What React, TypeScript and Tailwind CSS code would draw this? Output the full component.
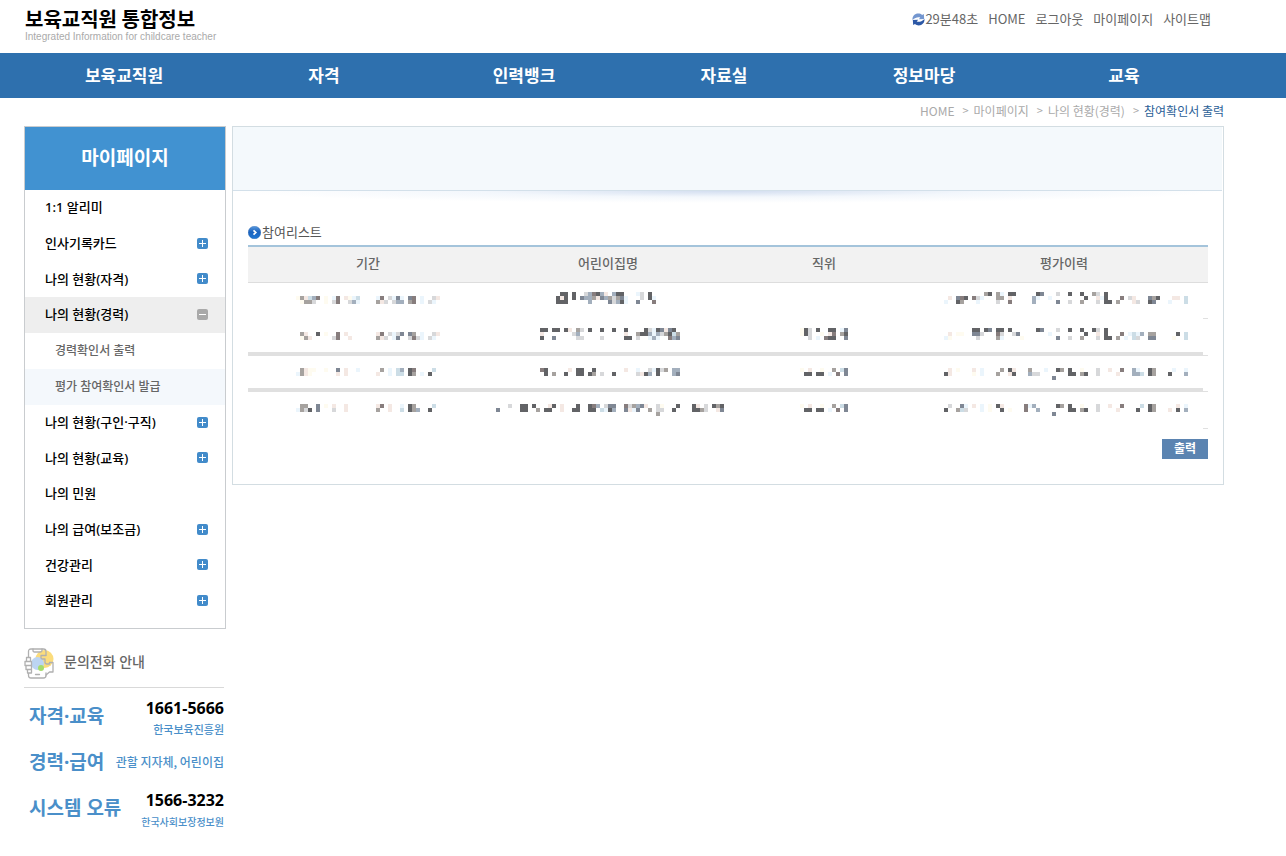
interface MenuItem {
  label: string;
  icon?: 'plus' | 'minus';
  children?: { label: string; current?: boolean }[];
}

interface ListRow {
  divider: boolean;
  period: string[];
  name: string[];
  position: string[];
  history: string[];
}

const NAV = ['보육교직원', '자격', '인력뱅크', '자료실', '정보마당', '교육'];

const UTIL_LINKS = ['HOME', '로그아웃', '마이페이지', '사이트맵'];

const CRUMBS = ['HOME', '마이페이지', '나의 현황(경력)'];

const MENU: MenuItem[] = [
  { label: '1:1 알리미' },
  { label: '인사기록카드', icon: 'plus' },
  { label: '나의 현황(자격)', icon: 'plus' },
  {
    label: '나의 현황(경력)',
    icon: 'minus',
    children: [{ label: '경력확인서 출력' }, { label: '평가 참여확인서 발급', current: true }],
  },
  { label: '나의 현황(구인·구직)', icon: 'plus' },
  { label: '나의 현황(교육)', icon: 'plus' },
  { label: '나의 민원' },
  { label: '나의 급여(보조금)', icon: 'plus' },
  { label: '건강관리', icon: 'plus' },
  { label: '회원관리', icon: 'plus' },
];

// Masked values: every line is a list of runs, "start column + one colour letter per cell"
const ROWS: ListRow[] = [
  {
    divider: false,
    period: [
      '',
      '0C 1GPTSB 7C 9KB 12PCKT 20KB 23LKNK 28NB 31K 34LP',
      '1CGGL 7C 9LB 13LSK 20GPL 24LSS 28GB 31K 33LK',
    ],
    name: [
      '18DD 21D 24LSBDSP 31SDD 37KL 40D',
      '17DPD 21D 23NSSGPNSGLGNK 38L 40DK',
      '17DDD 25S 30NLSDK 37N 41B',
    ],
    position: [],
    history: [
      '10GD 13GK 16DD 23DN 28L 31D 34D 37GL 40D',
      '1P 3NBD 7BLK 13GG 16P 22SK 26K 35D 38PK 40D 44B 46LP 51NGD 57PP 60T',
      '0K 3DG 8K 13L 16B 22S 28N 31L 34G 38L 40DD 43G 47PL 51DN 56K 60T',
    ],
  },
  {
    divider: true,
    period: [
      '',
      '1GP 5D 7C 10B 12P 20PB 23LKLN 28NG 31K 34LP',
      '1CGP 9LB 13P 20GPL 24KN 28LBLK 33LK',
    ],
    name: [
      '13DD 16DD 19DP 22GL 25D 28D 31D 34D 39DLKDNP 45ND',
      '13P 21LS 34P 37GDDSKSLGDTG',
      '13D 16N 22LL 28L 34DD 37L 40KSK 45BSN',
    ],
    position: ['0C 1DL 4D 7DD 10KN', '0C 1DL 5C 7PB 10GD', '2L 4K 6BDD 11N'],
    history: [
      '7DD 10DN 13DD 16D 23DN 28L 31D 34D 37DL 40D',
      '1P 3CC 7NNL 13BL 17LN 26K 35D 38P 40D 44B 46KTKS 51GG 58D 60T',
      '0KC 8L 13GK 19C 28N 31L 34G 38L 40DD 43G 45K 47TL 51NN 57C 60T',
    ],
  },
  {
    divider: true,
    period: [
      '',
      '1GPCC 7C 10N 12P 15K 21G 23K 25TS 28DB 34T',
      '0KGPC 10P 12P 20P 23K 25TT 28DG 31K 33D',
    ],
    name: [
      '',
      '13BD 20P 22DD 26D 34P 37K 40LKDLG 46SS',
      '14D 16G 19D 22DD 25DG 28L 31D 37LPDS 42D 46SN',
    ],
    position: ['', '0C 2P 5C 8G 10TN', '1DD 4DD 7K 9B 11N'],
    history: [
      '',
      '1P 3C 7P 9K 14G 16DP 21G 25K 28DG 31D 34C 38L 41P 44B 47SK 51DG 57K 60K',
      '0DP 7C 9K 13G 16PD 21SLL 31DD 34GD 38L 43P 47SST 51DG 56D 60S',
      '27N',
    ],
  },
  {
    divider: false,
    period: [
      '',
      '1GG 5N 7C 9P 12P 20PB 23P 26K 28DG 34T',
      '0KGLD 5N 9L 12P 20G 23P 26T 28DGS 33D',
    ],
    name: [
      '',
      '5L 8DD 11D 15PD 18P 22D 25DBS 29LNN 34BLGS 38NP 42LC 47D 51DP 54L 56DGD',
      '2N 8DD 12G 14DD 18P 21DD 25DD 28TKDS 34NPKN 40G 42LL 46D 51DDGL 57PN',
      '42G',
    ],
    position: ['', '0C 2P 5C 8G 10TN', '1DD 4DD 7K 9B 11N'],
    history: [
      '',
      '1L 4NK 7P 9K 11C 13DP 20BK 22S 28DG 31D 34C 38L 41P 44B 49T 51DG 58P 60K',
      '0D 3GTL 9K 11C 14D 16C 20B 23S 31DD 34GD 38L 43P 48D 51DG 56P 58D 60S',
      '27N',
    ],
  },
];

const TONES: Record<string, string> = {
  D: '#626366',
  B: '#877d7d',
  G: '#a6a29f',
  S: '#a3afbd',
  L: '#d7d8da',
  C: '#fefbf0',
  P: '#f4e8e3',
  K: '#ebf5fc',
  T: '#ccdde6',
  N: '#7f8794',
};

const CELL = 4;

function Masked({ lines, cols, start = 0 }: { lines: string[]; cols: number; start?: number }) {
  const cells = lines.flatMap((line, y) =>
    line
      .split(' ')
      .filter(Boolean)
      .flatMap(run => {
        const from = parseInt(run, 10);
        return run
          .replace(/\d+/, '')
          .split('')
          .map((tone, i) => ({ x: from + i + start, y, tone }));
      })
  );

  return (
    <svg
      width={cols * CELL}
      height={4 * CELL}
      shapeRendering="crispEdges"
      className="mx-auto block"
      aria-hidden="true"
    >
      {cells.map(c => (
        <rect
          key={`${c.x}-${c.y}`}
          x={c.x * CELL}
          y={c.y * CELL}
          width={CELL}
          height={CELL}
          fill={TONES[c.tone]}
        />
      ))}
    </svg>
  );
}

function ToggleIcon({ type }: { type: 'plus' | 'minus' }) {
  return (
    <svg
      width="11"
      height="11"
      viewBox="0 0 11 11"
      shapeRendering="crispEdges"
      className="mb-[2px]"
      aria-hidden="true"
    >
      <rect
        width="11"
        height="11"
        rx="2"
        shapeRendering="auto"
        fill={type === 'plus' ? '#428bca' : '#a9a9a9'}
      />
      <rect x="2" y="5" width="7" height="1" fill="#fff" />
      {type === 'plus' && <rect x="5" y="2" width="1" height="7" fill="#fff" />}
    </svg>
  );
}

function RefreshIcon() {
  return (
    <svg width="13" height="13" viewBox="0 0 13 13" aria-hidden="true">
      <path
        d="M.5 7C.2 3.300 2.800.6 6.200.6c1.600 0 2.900.5 3.900 1.400L11.800 1l.4 4.900-5.400.3 1.500-1.700C6 3.600 3.300 4.400.5 7Z"
        fill="#7396cf"
      />
      <path
        d="M12.500 6c.3 3.700-2.300 6.400-5.700 6.400-1.600 0-2.900-.5-3.900-1.400L1.200 12 .8 7.100l5.400-.3-1.500 1.700c2.300.9 5 .1 7.800-2.500Z"
        fill="#2c58a6"
      />
    </svg>
  );
}

function BulletIcon() {
  return (
    <svg width="13" height="13" viewBox="0 0 13 13" aria-hidden="true">
      <defs>
        <linearGradient id="bullet" x1="0" y1="0" x2="0" y2="1">
          <stop offset="0" stopColor="#5a9be0" />
          <stop offset=".45" stopColor="#1b62bd" />
          <stop offset="1" stopColor="#1f78d6" />
        </linearGradient>
      </defs>
      <circle cx="6.500" cy="6.500" r="6.300" fill="url(#bullet)" stroke="#1d5ba8" strokeWidth=".4" />
      <path d="M5.500 4.300 7.800 6.500 5.500 8.700" fill="none" stroke="#fff" strokeWidth="1.700" />
    </svg>
  );
}

function PhoneIcon() {
  return (
    <svg width="30" height="31" viewBox="0 0 30 31" fill="none" aria-hidden="true">
      <circle cx="20.500" cy="11" r="9" fill="#fbdc7c" />
      <circle cx="13.500" cy="15.500" r="6.500" fill="#bcd5f2" />
      <circle cx="17" cy="20" r="3" fill="#a5dc6c" />
      <g stroke="#b0b0b0" strokeWidth="1.300" strokeLinejoin="round" strokeLinecap="round">
        <path d="M4.500 13V3.500Q4.500 1 7 1h12.500Q22 1 22 3.500V7" />
        <path d="M4.500 25v2.500Q4.500 30 7 30h12.500q2.500 0 2.500-2.500V25" />
        <path d="M9 1v1.500Q9 4 10.500 4h6Q18 4 18 2.500V1" />
        <path d="M11.500 26.500h4" />
        <path d="M2.500 9.500h4v4h-4ZM1 13.500h6.500v4H1ZM2 17.500h5.500v4H2ZM3.500 21.500h4V25h-4Z" fill="#fff" />
        <path d="M22 7.500h-5v2.500q0 1 1.500 1H21V14q0 2 2 2h2.500v-1.500H29V24h-3.500l-3.500 3" />
      </g>
    </svg>
  );
}

function Header() {
  return (
    <header>
      <div className="flex h-[53px] justify-between pl-[25px] pr-[75px] font-['Noto_Sans_CJK_KR',sans-serif]">
        <a href="#" className="mt-[6px] block">
          <strong className="block text-[20px] leading-[25px] text-black">보육교직원 통합정보</strong>
          <span className="block font-['Liberation_Sans',sans-serif] text-[10px] leading-3 text-[#aaa]">
            Integrated Information for childcare teacher
          </span>
        </a>
        <ul className="mt-[9px] flex h-5 items-center gap-[10px] text-[13px] text-[#666]">
          <li className="flex items-center">
            <RefreshIcon />
            29분48초
          </li>
          {UTIL_LINKS.map(link => (
            <li key={link}>
              <a href="#">{link}</a>
            </li>
          ))}
        </ul>
      </div>
      <nav className="bg-[#2e70ae] pl-6 pr-[62px]">
        <ul className="grid h-[45px] grid-cols-6 items-center text-center text-[17px] font-bold text-white">
          {NAV.map(item => (
            <li key={item}>
              <a href="#">{item}</a>
            </li>
          ))}
        </ul>
      </nav>
    </header>
  );
}

function SideMenu() {
  return (
    <nav className="border border-[#c9cccf] pb-[9px]">
      <h2 className="flex h-[63px] items-center justify-center bg-[#4192d1] text-[19px] font-bold text-white">
        마이페이지
      </h2>
      <ul className="text-[13px] font-medium text-black">
        {MENU.map(item => (
          <li key={item.label} className="group">
            <a
              href="#"
              className={`flex h-9 items-center justify-between pl-5 pr-[17px] group-nth-[3n]:h-[35px] ${
                item.icon === 'minus' ? 'bg-[#eee]' : ''
              }`}
            >
              {item.label}
              {item.icon && <ToggleIcon type={item.icon} />}
            </a>
            {item.children && (
              <ul className="text-xs text-[#666]">
                {item.children.map(child => (
                  <li key={child.label}>
                    <a
                      href="#"
                      className={`flex h-9 items-center pl-[30px] ${child.current ? 'bg-[#f4f8fc]' : ''}`}
                    >
                      {child.label}
                    </a>
                  </li>
                ))}
              </ul>
            )}
          </li>
        ))}
      </ul>
    </nav>
  );
}

function Contact() {
  return (
    <section className="mr-[2px] mt-[19px]">
      <h3 className="flex h-10 items-start gap-[10px] border-b border-[#d9d9d9] text-sm font-medium text-[#666]">
        <PhoneIcon />
        <span className="leading-[28px]">문의전화 안내</span>
      </h3>
      <dl className="mt-[6px] text-[#4a8fc9]">
        <div className="flex h-[46px] items-center justify-between pl-[5px]">
          <dt className="pb-[2px] text-[19px] font-bold">자격·교육</dt>
          <dd className="pt-[2px] text-right">
            <strong className="block text-base leading-6 text-black">1661-5666</strong>
            <span className="block text-[11px] leading-5 font-medium">한국보육진흥원</span>
          </dd>
        </div>
        <div className="flex h-[46px] items-center justify-between pl-[5px]">
          <dt className="pb-[2px] text-[19px] font-bold">경력·급여</dt>
          <dd className="pb-[2px] font-['Noto_Sans_CJK_KR',sans-serif] text-xs font-medium">
            관할 지자체, 어린이집
          </dd>
        </div>
        <div className="flex h-[46px] items-center justify-between pl-[5px]">
          <dt className="pb-[2px] text-[19px] font-bold">시스템 오류</dt>
          <dd className="pt-[2px] text-right">
            <strong className="block text-base leading-6 text-black">1566-3232</strong>
            <span className="block text-[10px] leading-5 font-medium">한국사회보장정보원</span>
          </dd>
        </div>
      </dl>
    </section>
  );
}

function ParticipationTable() {
  return (
    <table className="w-full table-fixed border-separate border-spacing-0 border-t-2 border-[#a4c4db]">
      <colgroup>
        <col className="w-[25%]" />
        <col className="w-[25%]" />
        <col className="w-[20%]" />
        <col className="w-[30%]" />
      </colgroup>
      <thead>
        <tr className="h-9 bg-[#f2f2f2] text-[13px] text-[#666]">
          {['기간', '어린이집명', '직위', '평가이력'].map(title => (
            <th key={title} scope="col" className="border-b border-[#ddd] p-0 pb-px font-medium">
              {title}
            </th>
          ))}
        </tr>
      </thead>
      <tbody>
        {ROWS.map((row, i) => (
          <tr
            key={i}
            className={`h-9 bg-no-repeat align-top even:h-[37px] ${
              row.divider
                ? 'bg-[linear-gradient(#e0e0e0,#e0e0e0),linear-gradient(#e0e0e0,#e0e0e0)] bg-[size:5px_1px,calc(100%-5px)_4px] bg-[position:right_bottom,left_bottom]'
                : 'bg-[linear-gradient(#e0e0e0,#e0e0e0)] bg-[size:5px_1px] bg-[position:right_bottom]'
            } ${i < 2 ? '*:pt-[9px]' : '*:pt-2'}`}
          >
            <td className="px-0 pb-0">
              <Masked lines={row.period} cols={36} />
            </td>
            <td className="px-0 pb-0">
              <Masked lines={row.name} cols={60} />
            </td>
            <td className="px-0 pb-0">
              <Masked lines={row.position} cols={12} />
            </td>
            <td className="px-0 pb-0">
              <Masked lines={row.history} cols={62} start={1} />
            </td>
          </tr>
        ))}
      </tbody>
    </table>
  );
}

export default function App() {
  return (
    <div className="min-h-screen bg-white font-['Noto_Sans','Noto_Sans_CJK_KR',sans-serif]">
      <Header />
      <div className="pl-6 pr-[62px]">
        <ol className="flex h-7 items-center justify-end pb-[3px] font-['Noto_Sans_CJK_KR',sans-serif] text-xs text-[#aaa]">
          {CRUMBS.map(crumb => (
            <li key={crumb} className="flex items-center">
              <a href="#">{crumb}</a>
              <span className="ml-2 mr-[5px] text-[11px]">&gt;</span>
            </li>
          ))}
          <li className="text-[#2c5f97]" aria-current="page">
            참여확인서 출력
          </li>
        </ol>
        <div className="flex items-start gap-[6px]">
          <aside className="w-[202px] shrink-0">
            <SideMenu />
            <Contact />
          </aside>
          <main className="min-w-0 flex-1 border border-[#d3dde2]">
            <div className="mr-px h-16 border-b border-[#d3e0ea] bg-[#f4f9fc]" />
            <div className="h-3 bg-[radial-gradient(50%_100%_at_50%_0%,#d3def0,#f3f7fc_50%,#fff)]" />
            <div className="px-[15px] pb-[25px]">
              <h1 className="mt-[17px] flex h-[25px] items-center gap-px text-[13px] text-[#555]">
                <BulletIcon />
                참여리스트
              </h1>
              <ParticipationTable />
              <div className="mt-[10px] flex justify-end">
                <button
                  type="button"
                  className="h-5 w-[46px] bg-[#5b84b1] text-xs leading-5 font-bold text-white"
                >
                  출력
                </button>
              </div>
            </div>
          </main>
        </div>
      </div>
    </div>
  );
}
